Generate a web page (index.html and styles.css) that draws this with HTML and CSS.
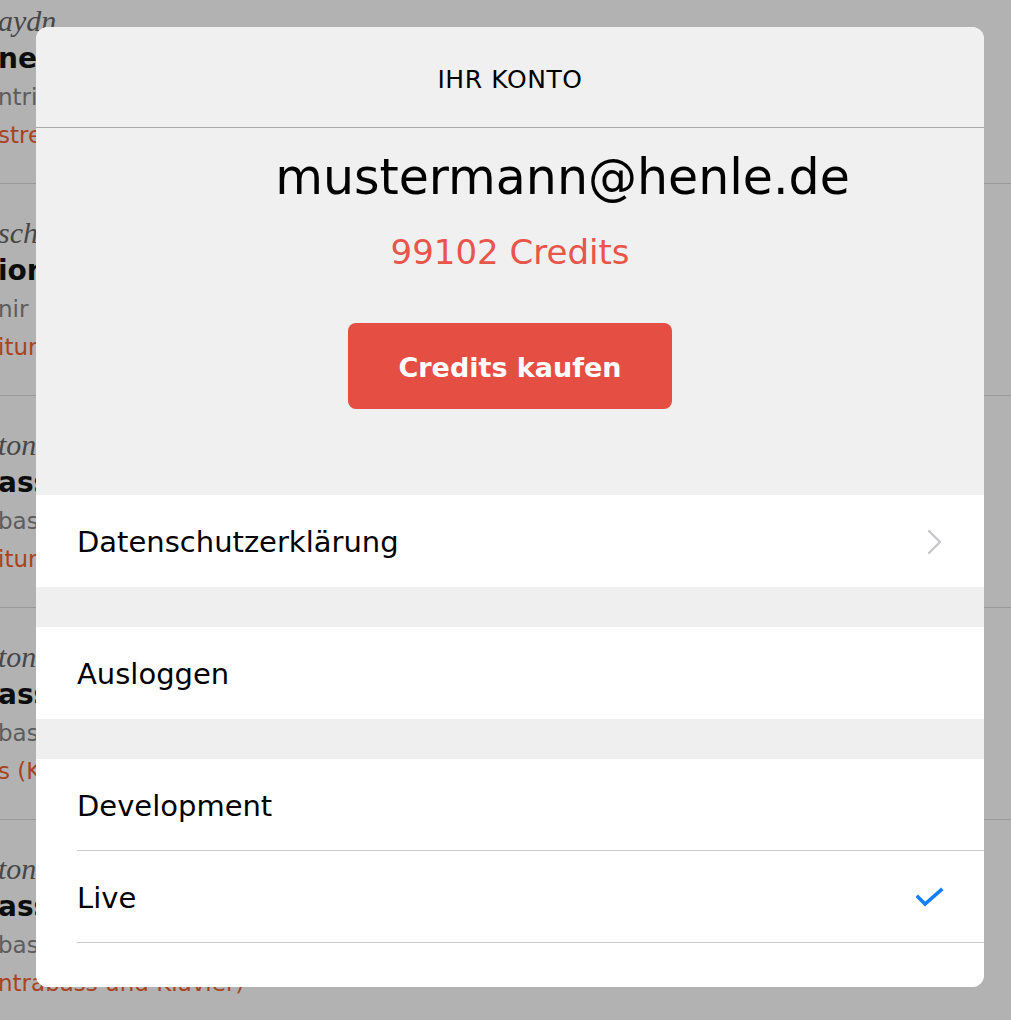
FILE: index.html
```html
<!DOCTYPE html>
<html lang="de">
<head>
    <meta charset="UTF-8">
    <meta name="viewport" content="width=device-width, initial-scale=1.0">
    <title>Ihr Konto</title>
    <link rel="stylesheet" href="styles.css">
</head>
<body>

<ul class="works">
    <li class="work">
        <div class="composer">aydn</div>
        <div class="title">ner</div>
        <div class="subtitle">ntric</div>
        <div class="edition">stre</div>
    </li>
    <li class="work">
        <div class="composer">sch</div>
        <div class="title">ion</div>
        <div class="subtitle">nir d</div>
        <div class="edition">itur</div>
    </li>
    <li class="work">
        <div class="composer">ton</div>
        <div class="title">ass</div>
        <div class="subtitle">bas</div>
        <div class="edition">itur</div>
    </li>
    <li class="work">
        <div class="composer">ton</div>
        <div class="title">ass</div>
        <div class="subtitle">bas</div>
        <div class="edition">s (Ko</div>
    </li>
    <li class="work">
        <div class="composer">ton</div>
        <div class="title">ass</div>
        <div class="subtitle">bas</div>
        <div class="edition">ntrabass und Klavier)</div>
    </li>
</ul>

<div class="modal">
    <div class="modal-header">IHR KONTO</div>

    <div class="account">
        <div class="email">mustermann@henle.de</div>
        <div class="credits">99102 Credits</div>
        <button class="buy-btn">Credits kaufen</button>
    </div>

    <div class="group">
        <div class="row">
            <span>Datenschutzerklärung</span>
            <svg class="chevron" width="16" height="26" viewBox="0 0 16 26">
                <path d="M2 2 L13 13 L2 24" fill="none" stroke="#c7c7cc" stroke-width="2.4" stroke-linecap="round" stroke-linejoin="round"/>
            </svg>
        </div>
    </div>

    <div class="group">
        <div class="row">
            <span>Ausloggen</span>
        </div>
    </div>

    <div class="group group-last">
        <div class="row row-lined">
            <span>Development</span>
        </div>
        <div class="row row-lined">
            <span>Live</span>
            <svg class="check" width="28" height="22" viewBox="0 0 28 22">
                <path d="M2 10 L9 17 L25 3" fill="none" stroke="#157efb" stroke-width="3.6" stroke-linecap="square" stroke-linejoin="miter"/>
            </svg>
        </div>
    </div>
</div>

</body>
</html>
```

FILE: styles.css
```css
body {
    margin: 0;
    width: 1011px;
    height: 1020px;
    overflow: hidden;
    background-color: #b2b2b2;
    font-family: "DejaVu Sans", sans-serif;
}

/* backdrop list behind the dialog */
.works {
    list-style: none;
    margin: -28px 0 0 -2px;
    padding: 0;
}

.work {
    height: 212px;
    padding-top: 30px;
    box-sizing: border-box;
    border-bottom: 1px solid #999;
    color: #4d4d4d;
}

.work div {
    height: 38px;
    line-height: 38px;
    white-space: nowrap;
}

.composer {
    font-family: "Liberation Serif", serif;
    font-style: italic;
    font-size: 30px;
    color: #474747;
}

.title {
    font-size: 28px;
    font-weight: 600;
    color: #0d0d0d;
}

.subtitle {
    font-size: 23px;
    color: #5c5c5c;
}

.edition {
    font-size: 23px;
    color: #a8431f;
}

/* dialog */
.modal {
    position: absolute;
    left: 36px;
    top: 27px;
    width: 948px;
    height: 960px;
    border-radius: 12px;
    overflow: hidden;
    background-color: #efefef;
    color: #000;
    display: flex;
    flex-direction: column;
}

.modal-header {
    height: 100px;
    flex-shrink: 0;
    line-height: 106px;
    text-align: center;
    font-size: 25px;
    letter-spacing: 0.6px;
    background-color: #f0f0f0;
    border-bottom: 1px solid #a9a9a9;
}

.account {
    height: 367px;
    flex-shrink: 0;
    display: flex;
    flex-direction: column;
    align-items: center;
    background-color: #f0f0f0;
}

.email {
    margin-top: 20px;
    padding-left: 105px;
    font-size: 49px;
    line-height: 60px;
}

.credits {
    margin-top: 22px;
    font-size: 34px;
    line-height: 44px;
    color: #e8554a;
}

.buy-btn {
    margin-top: 49px;
    width: 324px;
    height: 86px;
    border: none;
    border-radius: 8px;
    background-color: #e54e43;
    color: #fff;
    font-family: "DejaVu Sans", sans-serif;
    font-size: 27px;
    font-weight: bold;
    padding-top: 4px;
    cursor: pointer;
}

.group {
    background-color: #fff;
    margin-bottom: 40px;
    flex-shrink: 0;
}

.group-last {
    flex-grow: 1;
    margin-bottom: 0;
}

.row {
    height: 92px;
    margin-left: 41px;
    padding-right: 41px;
    display: flex;
    align-items: center;
    justify-content: space-between;
    font-size: 29px;
    padding-top: 2px;
    box-sizing: border-box;
}

.row-lined {
    border-bottom: 1px solid #c8c8c8;
}

.check {
    margin-right: -1px;
}
```
